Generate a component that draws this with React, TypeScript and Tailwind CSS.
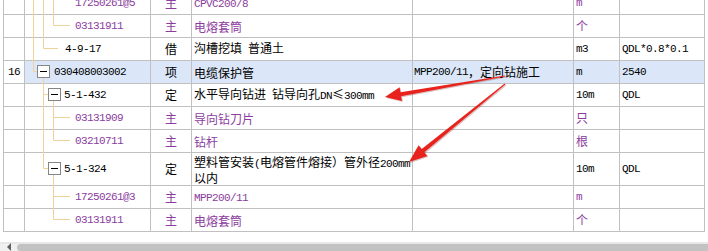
import React from 'react'

const MONO = "font-['Liberation_Mono',monospace] text-[11px] tracking-[-0.6px]"
const PURPLE = 'text-[#8b3c9e]'
const LINE = '#efd39a'

// ascii runs are drawn half-width, everything else in the CJK face
function Txt({ s }: { s: string }) {
  const parts = s.split(/([\x20-\x7e]+)/).filter(Boolean)
  return (
    <>
      {parts.map((p, i) =>
        /^[\x20-\x7e]+$/.test(p)
          ? <span key={i} className={`${MONO} whitespace-pre`}>{p}</span>
          : <span key={i}>{p}</span>
      )}
    </>
  )
}

type Row = {
  no?: string
  code: string
  indent: number
  type: string
  name: string[]
  spec?: string
  unit: string
  expr?: string
  purple?: boolean
  hl?: boolean
  tall?: boolean
}

const rows: Row[] = [
  { code: '17250261@5', indent: 50, type: '主', name: ['CPVC200/8'], unit: 'm', purple: true },
  { code: '03131911', indent: 50, type: '主', name: ['电熔套筒'], unit: '个', purple: true },
  { code: '4-9-17', indent: 40, type: '借', name: ['沟槽挖填 普通土'], unit: 'm3', expr: 'QDL*0.8*0.1' },
  { no: '16', code: '030408003002', indent: 29, type: '项', name: ['电缆保护管'], spec: 'MPP200/11，定向钻施工', unit: 'm', expr: '2540', hl: true },
  { code: '5-1-432', indent: 39, type: '定', name: ['水平导向钻进 钻导向孔DN≤300mm'], unit: '10m', expr: 'QDL' },
  { code: '03131909', indent: 50, type: '主', name: ['导向钻刀片'], unit: '只', purple: true },
  { code: '03210711', indent: 50, type: '主', name: ['钻杆'], unit: '根', purple: true },
  { code: '5-1-324', indent: 39, type: '定', name: ['塑料管安装(电熔管件熔接）管外径200mm', '以内'], unit: '10m', expr: 'QDL', tall: true },
  { code: '17250261@3', indent: 50, type: '主', name: ['MPP200/11'], unit: 'm', purple: true },
  { code: '03131911', indent: 50, type: '主', name: ['电熔套筒'], unit: '个', purple: true },
]

function Cell({ w, hl, className = '', children }: { w: string; hl?: boolean; className?: string; children?: React.ReactNode }) {
  return (
    <div className={`${w} flex shrink-0 items-center whitespace-nowrap border-r border-[#c0c0c0] ${hl ? 'bg-[#dbe7f9]' : ''} ${className}`}>
      {children}
    </div>
  )
}

function Box({ x, y }: { x: number; y: number }) {
  return (
    <g>
      <rect x={x + 0.5} y={y + 0.5} width={12} height={12} fill="#fff" stroke="#858585" />
      <line x1={x + 3} x2={x + 10} y1={y + 6.5} y2={y + 6.5} stroke="#000" />
    </g>
  )
}

export default function App() {
  return (
    <div className="relative h-[251px] w-[708px] overflow-hidden bg-white font-['Noto_Sans_CJK_SC',sans-serif] text-[12px] text-black">
      <div className="h-[242px] overflow-hidden pl-[3px]">
        <div className="-mt-[8px] w-[702px] border-l border-[#c0c0c0]">
          {rows.map((r, i) => {
            const tone = r.purple ? PURPLE : 'text-black'
            return (
              <div key={i} className={`flex border-b border-[#c0c0c0] ${r.tall ? 'h-[33px]' : 'h-[23px]'}`}>
                <Cell w="w-[21px]" className="justify-center">
                  {r.no && <span className={MONO}>{r.no}</span>}
                </Cell>
                <Cell w="w-[126px]" hl={r.hl} className={tone}>
                  <span className={MONO} style={{ paddingLeft: r.indent }}>{r.code}</span>
                </Cell>
                <Cell w="w-[41px]" hl={r.hl} className={`justify-center ${tone}`}>{r.type}</Cell>
                <Cell w="w-[221px]" hl={r.hl} className={`pl-[2px] ${tone}`}>
                  <div className="leading-[13px]">
                    {r.name.map((n, j) => <div key={j}><Txt s={n} /></div>)}
                  </div>
                </Cell>
                <Cell w="w-[161px]" hl={r.hl} className="pl-[1px]">
                  {r.spec && <Txt s={r.spec} />}
                </Cell>
                <Cell w="w-[46px]" hl={r.hl} className={`pl-[2px] ${tone}`}>
                  <Txt s={r.unit} />
                </Cell>
                <Cell w="w-[85px]" hl={r.hl} className="pl-[2px]">
                  {r.expr && <span className={MONO}>{r.expr}</span>}
                </Cell>
              </div>
            )
          })}
        </div>
      </div>

      {/* horizontal scrollbar */}
      <div className="flex h-[9px] border-t-2 border-[#e8e8e8] bg-[#f0f0f0]">
        <div className="flex w-[17px] items-end justify-center pb-0">
          <div className="h-0 w-0 border-y-[4px] border-r-[4px] border-y-transparent border-r-[#606060]" />
        </div>
        <div className="flex-1 rounded-l-[4px] bg-[#c2c2c2]" />
      </div>

      <svg className="pointer-events-none absolute left-0 top-0" width={708} height={251}>
        {/* tree connectors */}
        <g stroke={LINE} strokeWidth={1} fill="none">
          <path d="M33.5 0V71.5H37" />
          <path d="M43.5 0V48.5H58" />
          <path d="M53.5 0V25.5H70" />
          <path d="M43.5 78V168.5H48M43.5 94.5H48" />
          <path d="M53.5 101V140.5H70M53.5 117.5H70" />
          <path d="M53.5 175V219.5H70M53.5 196.5H70" />
        </g>
        <Box x={37} y={65} />
        <Box x={48} y={88} />
        <Box x={48} y={162} />

        {/* callout arrows */}
        <g fill="rgba(120,0,0,0.25)" transform="translate(1 1)">
          <polygon points="504.9,75.5 400.5,92.2 399.6,87.3 385,97 402,101.1 401.1,96.2 505.1,76.5" />
          <polygon points="504.7,83.6 421.7,149 418.6,145.2 409,162 427.4,156 424.3,152.2 505.3,84.4" />
        </g>
        <g fill="#e8231e">
          <polygon points="504.9,75.5 400.5,92.2 399.6,87.3 385,97 402,101.1 401.1,96.2 505.1,76.5" />
          <polygon points="504.7,83.6 421.7,149 418.6,145.2 409,162 427.4,156 424.3,152.2 505.3,84.4" />
        </g>
      </svg>
    </div>
  )
}
